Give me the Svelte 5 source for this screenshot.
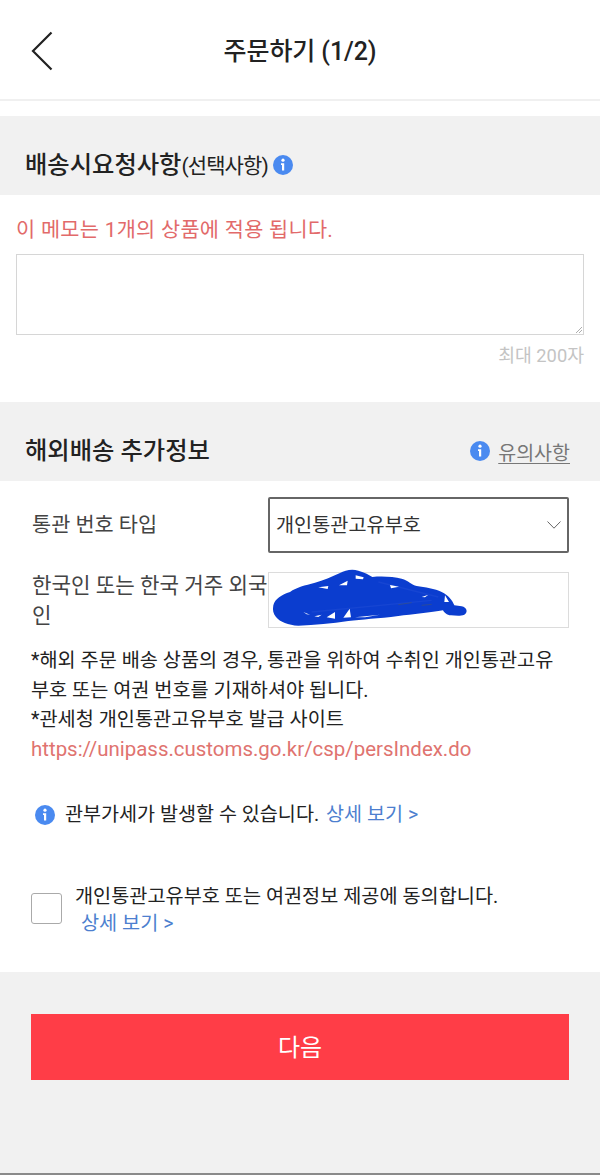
<script>
  const sections = { memo: '이 메모는 1개의 상품에 적용 됩니다.' };
</script>

{#snippet info(cls)}
  <svg class={cls} viewBox="0 0 20 20" aria-hidden="true">
    <circle cx="10" cy="10" r="10" fill="#4a8af0" />
    <circle cx="10" cy="5.2" r="1.6" fill="#fff" />
    <path d="M8 8.3h3.2v7.2H9V10H8z" fill="#fff" />
  </svg>
{/snippet}

<main class="page">
  <header class="top">
    <svg class="back" viewBox="0 0 22 40" aria-hidden="true">
      <path d="M20.5 1.5 2 20l18.5 18.5" fill="none" stroke="#222" stroke-width="2.2" />
    </svg>
    <h1>주문하기 (1/2)</h1>
  </header>

  <div class="spacer"></div>

  <section class="band">
    <h2>배송시요청사항<small>(선택사항)</small></h2>
    {@render info('ic-head')}
  </section>

  <section class="memo">
    <p class="warn">{sections.memo}</p>
    <div class="area">
      <svg class="grip" viewBox="0 0 6 6" aria-hidden="true">
        <path d="M0 6 6 0M3 6l3-3" stroke="#999" stroke-width=".8" />
      </svg>
    </div>
    <p class="count">최대 200자</p>
  </section>

  <section class="band">
    <h2>해외배송 추가정보</h2>
    <div class="notice">
      {@render info('ic-head')}
      <span>유의사항</span>
    </div>
  </section>

  <section class="form">
    <div class="row first">
      <div class="label">통관 번호 타입</div>
      <div class="select">
        <span>개인통관고유부호</span>
        <svg viewBox="0 0 14 8" aria-hidden="true">
          <path d="M.5.5 7 7.2 13.5.5" fill="none" stroke="#666" stroke-width="1" />
        </svg>
      </div>
    </div>
    <div class="row second">
      <div class="label two">한국인 또는 한국 거주 외국인</div>
      <div class="input">
        <svg class="scribble" viewBox="0 0 630 210" aria-hidden="true">
          <path d="M25 130C30 110 50 98 75 90 95 75 120 70 150 62 175 55 200 45 225 33 240 25 260 20 280 26 300 32 312 38 322 45 350 42 385 44 410 50 430 56 440 68 455 72 480 76 510 80 530 90 550 100 562 115 568 130L590 133C606 136 610 152 598 158 585 163 570 160 558 160 545 160 538 152 534 145 500 150 440 158 400 162 340 170 290 172 250 177 200 184 150 190 100 191 70 190 45 180 33 165 25 155 22 145 25 130Z" fill="#0b3dcf" />
          <path d="M140 150 500 115M340 60 520 105" fill="none" stroke="#1645d2" stroke-width="4" />
          <path d="M160 76 190 72 188 81ZM222 70 248 56 246 70ZM272 40 296 46 294 52 272 50ZM375 69 402 74 378 79ZM185 166 210 150 210 170ZM235 167 254 140 258 166ZM540 100 552 120 538 120ZM115 150 135 158 125 157ZM148 163 170 158 160 165ZM270 166 345 158 300 166ZM470 105 490 98 480 106Z" fill="#fff" />
          <path d="M470 130 500 127M400 128 440 122" stroke="#39507f" stroke-width="2" fill="none" />
        </svg>
      </div>
    </div>

    <div class="desc">
      <p>*해외 주문 배송 상품의 경우, 통관을 위하여 수취인 개인통관고유부호 또는 여권 번호를 기재하셔야 됩니다.</p>
      <p>*관세청 개인통관고유부호 발급 사이트</p>
      <p class="url">https://unipass.customs.go.kr/csp/persIndex.do</p>
    </div>

    <div class="tax">
      {@render info('ic-tax')}
      <span>관부가세가 발생할 수 있습니다.</span>
      <span class="link">상세 보기 &gt;</span>
    </div>

    <div class="agree">
      <div class="check"></div>
      <div class="agree-text">
        <div>개인통관고유부호 또는 여권정보 제공에 동의합니다.</div>
        <div class="link indent">상세 보기 &gt;</div>
      </div>
    </div>
  </section>

  <section class="foot">
    <button type="button">다음</button>
  </section>
</main>

<style>
  :global(body) { margin: 0; background: #fff; }
  .page {
    width: 600px;
    height: 1175px;
    overflow: hidden;
    display: flex;
    flex-direction: column;
    font-family: Roboto, "Noto Sans CJK KR", sans-serif;
    color: #222;
    box-sizing: border-box;
    border-bottom: 2px solid #8a8a8a;
  }
  p, h1, h2 { margin: 0; }
  .top {
    height: 99px;
    flex: none;
    position: relative;
    display: flex;
    align-items: center;
    justify-content: center;
    border-bottom: 2px solid #f0f0f0;
    box-sizing: content-box;
  }
  .back { position: absolute; left: 31px; top: 31px; width: 22px; height: 40px; }
  h1 { font-size: 25px; font-weight: 500; letter-spacing: -.1px; color: #222; margin-bottom: 1px; }
  .spacer { height: 15px; flex: none; }
  .band {
    height: 79px;
    flex: none;
    background: #f1f1f1;
    display: flex;
    align-items: center;
    padding: 19px 30px 0 25px;
    box-sizing: border-box;
  }
  h2 { font-size: 24.3px; font-weight: 500; color: #222; line-height: 36px; }
  h2 small { font-size: 21px; font-weight: 400; letter-spacing: -.9px; }
  .ic-head { width: 20px; height: 20px; margin-left: 5px; flex: none; }
  .memo {
    height: 207px;
    flex: none;
    padding: 0 16px;
    box-sizing: border-box;
  }
  .warn { color: #e26a6a; font-size: 20.8px; line-height: 28px; margin-top: 21px; letter-spacing: .3px; }
  .area {
    margin-top: 10px;
    height: 81px;
    border: 1px solid #d6d6d6;
    position: relative;
    box-sizing: border-box;
  }
  .grip { position: absolute; right: 1px; bottom: 1px; width: 6px; height: 6px; }
  .count { text-align: right; color: #c4c4c4; font-size: 18.3px; line-height: 24px; margin-top: 9px; }
  .notice {
    margin-left: auto;
    display: flex;
    align-items: center;
    gap: 8px;
    color: #777;
    font-size: 19.5px;
  }
  .notice span { text-decoration: underline; text-underline-offset: 3px; }
  .form {
    height: 491px;
    flex: none;
    padding: 0 31px;
    box-sizing: border-box;
  }
  .row { display: flex; align-items: center; }
  .row.first { margin-top: 16px; height: 56px; }
  .row.second { margin-top: 19px; height: 56px; }
  .label { width: 237px; flex: none; font-size: 20.8px; color: #444; padding-left: 1px; box-sizing: border-box; padding-bottom: 4px; }
  .label.two { line-height: 30px; font-size: 21.2px; padding-bottom: 0; padding-top: 1px; }
  .select {
    width: 301px;
    height: 56px;
    margin-right: -1px;
    box-sizing: border-box;
    border: 2px solid #666;
    border-radius: 2px;
    display: flex;
    align-items: center;
    justify-content: space-between;
    padding: 0 6px 4px;
    font-size: 19.7px;
    color: #333;
  }
  .select svg { width: 14px; height: 8px; margin-top: 4px; }
  .input {
    width: 301px;
    height: 56px;
    margin-right: -1px;
    box-sizing: border-box;
    border: 1px solid #dcdcdc;
    position: relative;
  }
  .scribble { position: absolute; left: -4px; top: -11px; width: 210px; height: 70px; overflow: visible; }
  .desc { margin-top: 18px; font-size: 19.7px; line-height: 29.5px; color: #222; }
  .url { color: #e0736f; font-size: 20.45px; }
  .tax {
    margin-top: 36px;
    display: flex;
    align-items: center;
    font-size: 19.6px;
    line-height: 30px;
    padding-left: 4px;
    color: #222;
  }
  .ic-tax { width: 20px; height: 20px; margin-right: 10px; flex: none; }
  .link { color: #4d7fcf; margin-left: 7px; }
  .agree { margin-top: 53px; display: flex; align-items: center; }
  .check {
    width: 31px;
    height: 31px;
    flex: none;
    box-sizing: border-box;
    border: 1px solid #aaa;
    border-radius: 3px;
    margin-top: -3px;
  }
  .agree-text { margin-left: 13px; font-size: 19.7px; line-height: 27px; color: #222; }
  .agree .link { margin-left: 6px; }
  .foot {
    flex: 1;
    background: #f1f1f1;
    padding: 42px 31px 0;
  }
  button {
    display: block;
    width: 538px;
    height: 66px;
    border: 0;
    background: #ff3d47;
    color: #fff;
    font: inherit;
    font-size: 24px;
    padding: 0 0 4px;
  }
</style>
